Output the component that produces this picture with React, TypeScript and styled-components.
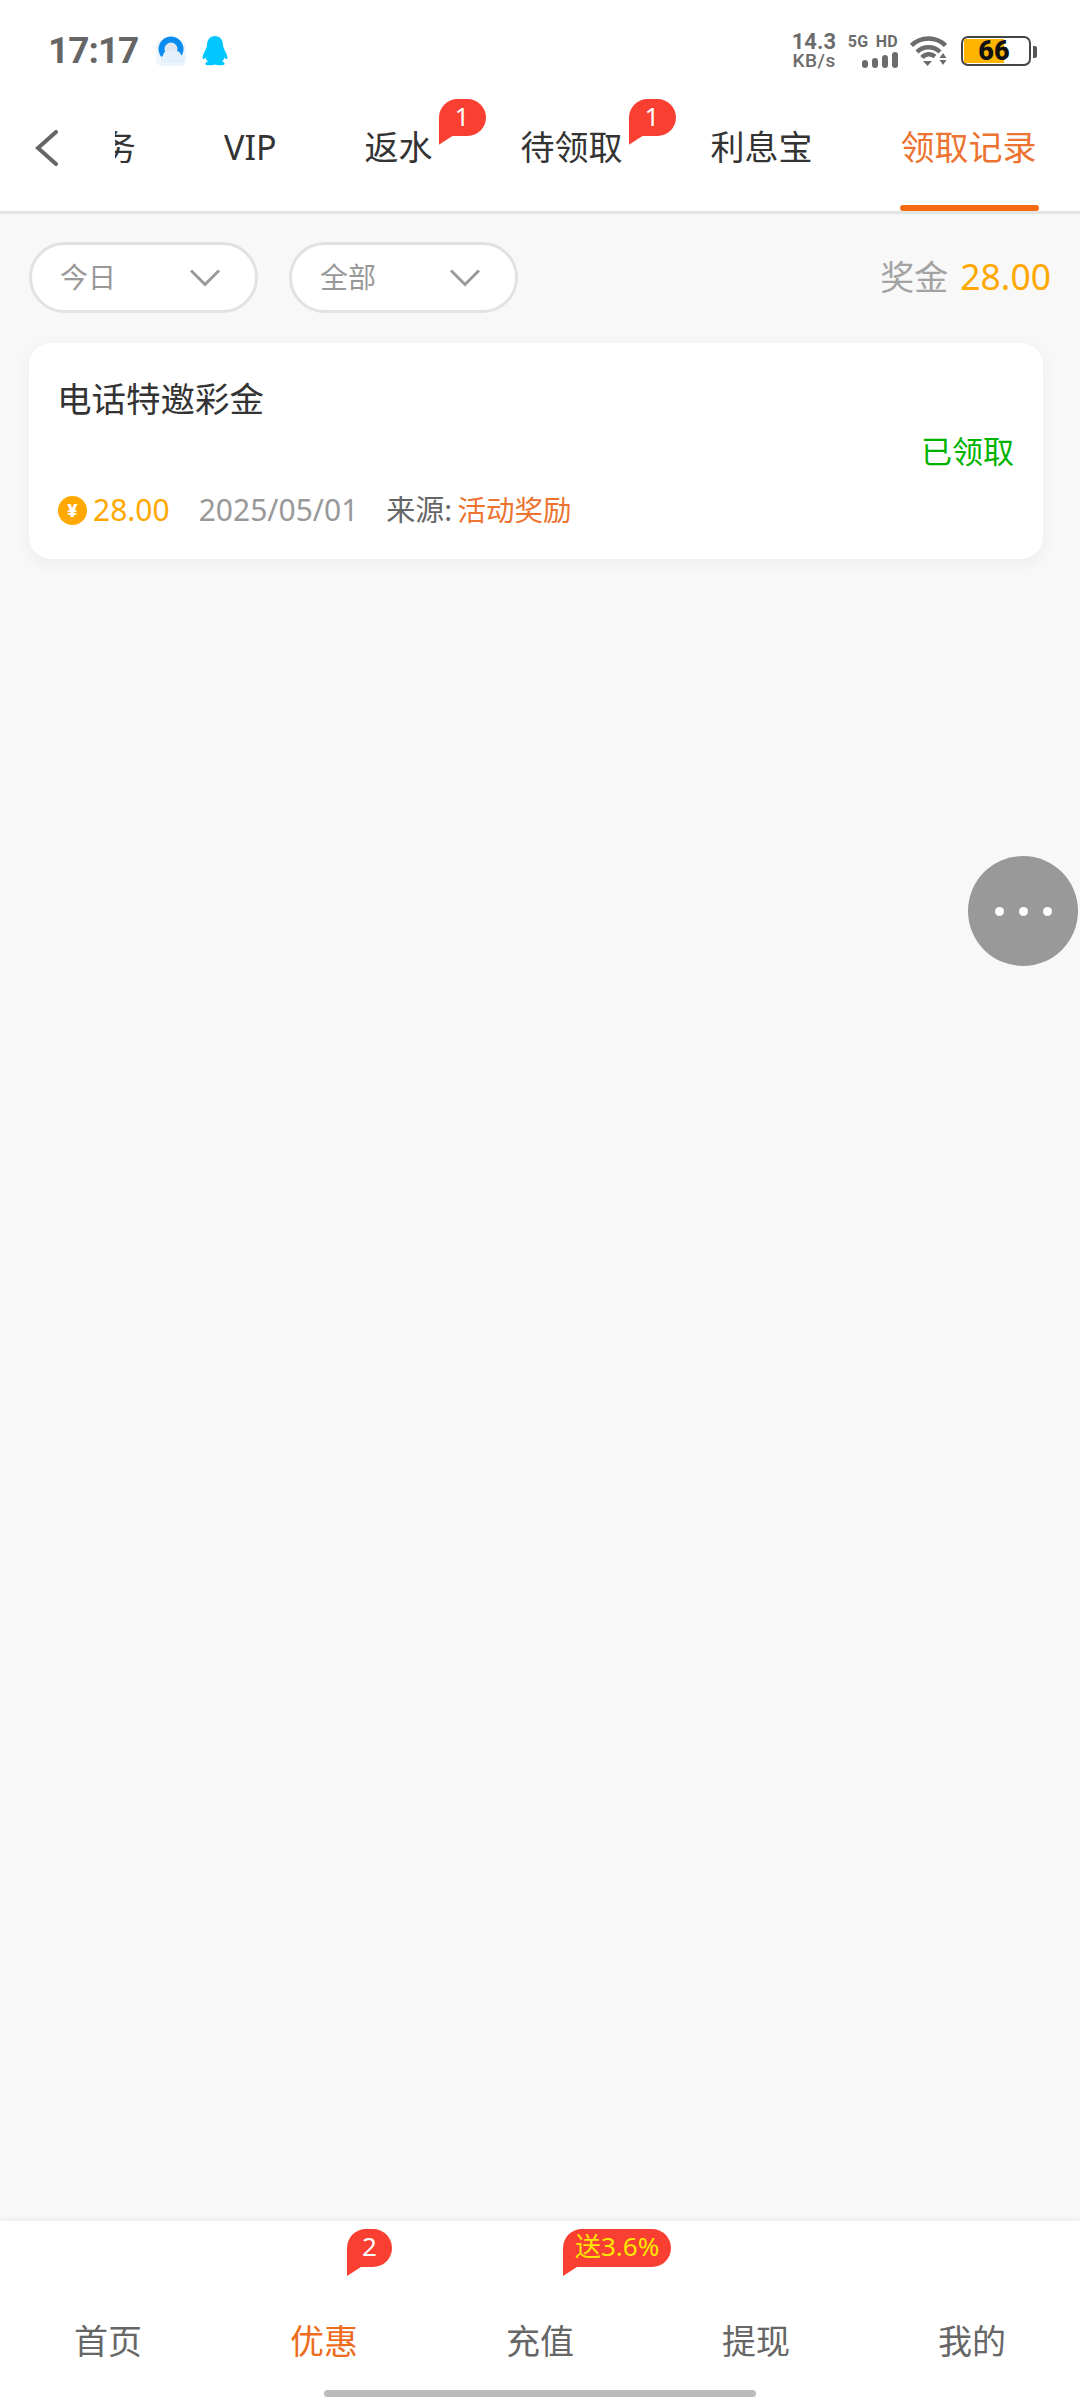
import React from 'react';
import styled, { createGlobalStyle } from 'styled-components';

const GlobalStyle = createGlobalStyle`
  html, body {
    margin: 0;
    padding: 0;
    background: #f8f8f8;
    font-family: "Noto Sans", "Noto Sans CJK SC", sans-serif;
  }
  * {
    box-sizing: border-box;
  }
`;

const ORANGE = '#ec7330';
const GOLD = '#ffa800';

const Page = styled.div`
  position: relative;
  width: 1080px;
  height: 2400px;
  display: flex;
  flex-direction: column;
  overflow: hidden;
  background: #f8f8f8;
`;

const Header = styled.header`
  background: #fff;
  border-bottom: 3px solid #e5e5e5;
`;

const StatusBar = styled.div`
  height: 80px;
  padding: 30px 49px 0 48px;
  display: flex;
  align-items: flex-start;
  justify-content: space-between;
`;

const StatusLeft = styled.div`
  display: flex;
  align-items: center;
  height: 42px;
  gap: 16px;
`;

const Clock = styled.span`
  font-family: "Roboto", sans-serif;
  font-size: 37px;
  font-weight: 700;
  line-height: 42px;
  letter-spacing: -1px;
  color: #666;
  margin-right: 2px;
`;

const StatusRight = styled.div`
  display: flex;
  align-items: center;
  height: 42px;
`;

const Speed = styled.div`
  width: 46px;
  margin-right: 12px;
  font-family: "Roboto", sans-serif;
  color: #6c6c6c;
  text-align: right;
`;

const SpeedValue = styled.div`
  font-size: 22px;
  font-weight: 700;
  line-height: 20px;
`;

const SpeedUnit = styled.div`
  font-size: 19px;
  font-weight: 500;
  line-height: 18px;
  letter-spacing: 0.6px;
`;

const Network = styled.div`
  width: 50px;
  margin-right: 12px;
  display: flex;
  flex-direction: column;
  align-items: flex-end;
  gap: 3px;
`;

const NetworkLabel = styled.div`
  font-family: "Roboto", sans-serif;
  font-size: 16px;
  font-weight: 700;
  line-height: 15px;
  letter-spacing: 0.3px;
  word-spacing: 3px;
  color: #6c6c6c;
  white-space: nowrap;
`;

const Battery = styled.div`
  position: relative;
  width: 70px;
  height: 30px;
  margin-left: 14px;
  padding: 1px;
  border: 2px solid #444;
  border-radius: 7px;
  &::after {
    content: '';
    position: absolute;
    left: 70px;
    top: 8px;
    width: 4px;
    height: 12px;
    border-radius: 0 2px 2px 0;
    background: #555;
  }
`;

const BatteryFill = styled.div`
  height: 100%;
  background: #ffb400;
`;

const BatteryText = styled.span`
  position: absolute;
  left: 13px;
  top: 0;
  width: 36px;
  text-align: center;
  font-family: "Roboto", sans-serif;
  font-size: 27px;
  line-height: 26px;
  font-weight: 900;
  color: #111;
`;

const NavRow = styled.div`
  height: 131px;
  display: flex;
  align-items: stretch;
`;

const BackButton = styled.div`
  flex: 0 0 115px;
  padding: 50px 0 0 35px;
`;

const TabViewport = styled.div`
  flex: 1;
  overflow: hidden;
`;

const TabTrack = styled.div`
  display: flex;
  height: 100%;
  width: max-content;
  margin-left: -91px;
`;

const Tab = styled.div<{ $active?: boolean }>`
  position: relative;
  padding: 43px 44px 0;
  font-size: 34px;
  line-height: 48px;
  white-space: nowrap;
  color: ${(p) => (p.$active ? ORANGE : '#333')};
  ${(p) =>
    p.$active &&
    `
    &::after {
      content: '';
      position: absolute;
      left: 43px;
      right: 42px;
      bottom: 0;
      height: 6px;
      border-radius: 3px;
      background: #f56c12;
    }
  `}
`;

const Bubble = styled.span<{ $promo?: boolean }>`
  position: absolute;
  height: 37px;
  min-width: 47px;
  padding: 0 ${(p) => (p.$promo ? '12px' : '0')};
  border-radius: 19px 19px 19px 0;
  background: #f83f31;
  color: ${(p) => (p.$promo ? '#ffe600' : '#fff')};
  font-size: 26px;
  line-height: 35px;
  text-align: center;
  white-space: nowrap;
  &::after {
    content: '';
    position: absolute;
    left: 0;
    top: 100%;
    width: 14px;
    height: 9px;
    background: #f83f31;
    clip-path: polygon(0 0, 100% 0, 0 100%);
  }
`;

const TabBubble = styled(Bubble)`
  left: calc(100% - 38px);
  top: 19px;
`;

const Main = styled.main`
  flex: 1;
  padding: 28px 30px 0 29px;
`;

const FilterRow = styled.div`
  display: flex;
  align-items: center;
  gap: 31px;
`;

const Pill = styled.div`
  width: 229px;
  height: 71px;
  padding: 1px 35px 0 28px;
  display: flex;
  align-items: center;
  justify-content: space-between;
  background: #fff;
  border: 3px solid #e2e2e2;
  border-radius: 36px;
  font-size: 28px;
  line-height: 60px;
  color: #999;
`;

const PillLabel = styled.span`
  position: relative;
  top: -1px;
`;

const Total = styled.div`
  margin: -4px -1px 0 auto;
  display: flex;
  align-items: baseline;
  gap: 12px;
  font-size: 34px;
  color: #a3a3a3;
`;

const Gold = styled.span<{ $large?: boolean }>`
  color: ${GOLD};
  font-size: ${(p) => (p.$large ? '35.500px' : 'inherit')};
`;

const Card = styled.section`
  margin: 30px 7px 0 0;
  padding: 31px 29px 28px 28px;
  background: #fff;
  border-radius: 22px;
  box-shadow: 0 4px 14px rgba(120, 100, 90, 0.08);
`;

const CardTitle = styled.div`
  font-size: 34.500px;
  line-height: 50px;
  color: #333;
`;

const CardStatus = styled.div`
  margin-top: 9px;
  font-size: 31px;
  line-height: 36px;
  text-align: right;
  color: #00b300;
`;

const CardFoot = styled.div`
  margin-top: 22px;
  height: 40px;
  display: flex;
  align-items: center;
  font-size: 30px;
  line-height: 38px;
  padding: 0 0 2px 1px;
`;

const Coin = styled.span`
  flex: 0 0 29px;
  height: 29px;
  margin-right: 6px;
  border-radius: 50%;
  background: ${GOLD};
  color: #fff;
  font-family: "Roboto", sans-serif;
  font-size: 19px;
  font-weight: 900;
  line-height: 29px;
  text-align: center;
`;

const DateText = styled.span`
  margin-left: 29px;
  color: #999;
`;

const Source = styled.span`
  margin-left: 28px;
  font-size: 29px;
  color: #666;
`;

const SourceName = styled.span`
  margin-left: -2px;
  font-size: 28.500px;
  color: ${ORANGE};
`;

const FloatButton = styled.div`
  position: absolute;
  left: 968px;
  top: 856px;
  width: 110px;
  height: 110px;
  border-radius: 50%;
  background: #999;
  display: flex;
  align-items: center;
  justify-content: center;
  gap: 15px;
`;

const Dot = styled.span`
  width: 9px;
  height: 9px;
  border-radius: 50%;
  background: #fff;
`;

const BottomNav = styled.nav`
  height: 179px;
  background: #fff;
  box-shadow: 0 -2px 5px rgba(0, 0, 0, 0.05);
  display: flex;
  flex-direction: column;
  align-items: center;
`;

const BottomTabs = styled.div`
  align-self: stretch;
  height: 169px;
  display: grid;
  grid-template-columns: repeat(5, 1fr);
`;

const BottomTab = styled.div<{ $active?: boolean }>`
  position: relative;
  padding-top: 96px;
  font-size: 34px;
  line-height: 48px;
  text-align: center;
  color: ${(p) => (p.$active ? '#ee6c1c' : '#666')};
`;

const BottomBubble = styled(Bubble)`
  left: 131px;
  top: 8px;
  height: 38px;
  line-height: 35px;
  min-width: 45px;
`;

const HomeBar = styled.div`
  width: 432px;
  height: 7px;
  border-radius: 4px;
  background: #bbb;
`;

function QQBrowserIcon() {
  return (
    <svg width="30" height="30" viewBox="0 0 30 30">
      <rect y="4" width="30" height="26" rx="6" fill="#eef5fc" />
      <circle cx="15" cy="13" r="9.500" fill="#dfe7f0" stroke="#0a8cf0" strokeWidth="6" />
      <path d="M8 27a4 4 0 0 1-1-7.500 6 6 0 0 1 10-3.500 5 5 0 0 1 8 3 4 4 0 0 1 0 8z" fill="#e4f1fc" />
    </svg>
  );
}

function PenguinIcon() {
  return (
    <svg width="26" height="30" viewBox="0 0 26 30">
      <path
        fill="#00c8ff"
        d="M13 0c5 0 8 4 8 9 0 2 1 3 2 6 2 3 3 7 2 8-1 .6-2-.6-2.600-1.500-.4 1.700-1 3-2.400 4 1.800.6 2.800 1.400 2.600 2.400-.2 1.200-2.600 1.600-5.600 1.400-1.400-.1-2-.5-4-.5s-2.600.4-4 .5c-3 .2-5.400-.2-5.600-1.400-.2-1 .8-1.800 2.600-2.400-1.400-1-2-2.300-2.400-4C2.600 22.400 2 23.600 1 23c-1-1 0-5 2-8 1-3 2-4 2-6 0-5 3-9 8-9z"
      />
    </svg>
  );
}

function SignalIcon() {
  return (
    <svg width="36" height="16" viewBox="0 0 36 16" fill="#6c6c6c">
      <rect x="0" y="8" width="6" height="8" rx="3" />
      <rect x="10" y="6" width="6" height="10" rx="3" />
      <rect x="20" y="3" width="6" height="13" rx="3" />
      <rect x="30" y="0" width="6" height="16" rx="3" />
    </svg>
  );
}

function WifiIcon() {
  return (
    <svg width="37" height="30" viewBox="0 0 37 30" fill="none" stroke="#6c6c6c" strokeWidth="4.500">
      <path d="M1.500 9.500a24 24 0 0 1 34 0" />
      <path d="M7 16a16.500 16.500 0 0 1 23 0" />
      <path d="M12 21.500a9 9 0 0 1 13-1" />
      <path d="M13 25h9l-4.500 5z" fill="#6c6c6c" stroke="none" />
      <path d="M33 17l3.500 5h-7zM33 29l3.500-5h-7z" fill="#6c6c6c" stroke="none" />
    </svg>
  );
}

function BackIcon() {
  return (
    <svg width="24" height="36" viewBox="0 0 24 36" fill="none" stroke="#666" strokeWidth="4" strokeLinecap="round">
      <path d="M21 2L3 18l18 16" />
    </svg>
  );
}

function ChevronIcon() {
  return (
    <svg width="30" height="18" viewBox="0 0 30 18" fill="none" stroke="#999" strokeWidth="3">
      <path d="M1 1.500l14 14 14-14" />
    </svg>
  );
}

const topTabs = [
  { label: '任务' },
  { label: 'VIP' },
  { label: '返水', badge: '1' },
  { label: '待领取', badge: '1' },
  { label: '利息宝' },
  { label: '领取记录', active: true },
];

const bottomTabs = [
  { label: '首页' },
  { label: '优惠', active: true, badge: '2' },
  { label: '充值', badge: '送3.6%', promo: true },
  { label: '提现' },
  { label: '我的' },
];

export default function App() {
  return (
    <Page>
      <GlobalStyle />
      <Header>
        <StatusBar>
          <StatusLeft>
            <Clock>17:17</Clock>
            <QQBrowserIcon />
            <PenguinIcon />
          </StatusLeft>
          <StatusRight>
            <Speed>
              <SpeedValue>14.3</SpeedValue>
              <SpeedUnit>KB/s</SpeedUnit>
            </Speed>
            <Network>
              <NetworkLabel>5G HD</NetworkLabel>
              <SignalIcon />
            </Network>
            <WifiIcon />
            <Battery>
              <BatteryFill style={{ width: '62%' }} />
              <BatteryText>66</BatteryText>
            </Battery>
          </StatusRight>
        </StatusBar>
        <NavRow>
          <BackButton>
            <BackIcon />
          </BackButton>
          <TabViewport>
            <TabTrack>
              {topTabs.map((tab) => (
                <Tab key={tab.label} $active={tab.active}>
                  {tab.label}
                  {tab.badge && <TabBubble>{tab.badge}</TabBubble>}
                </Tab>
              ))}
            </TabTrack>
          </TabViewport>
        </NavRow>
      </Header>

      <Main>
        <FilterRow>
          <Pill>
            <PillLabel>今日</PillLabel>
            <ChevronIcon />
          </Pill>
          <Pill>
            <PillLabel>全部</PillLabel>
            <ChevronIcon />
          </Pill>
          <Total>
            奖金
            <Gold $large>28.00</Gold>
          </Total>
        </FilterRow>
        <Card>
          <CardTitle>电话特邀彩金</CardTitle>
          <CardStatus>已领取</CardStatus>
          <CardFoot>
            <Coin>¥</Coin>
            <Gold>28.00</Gold>
            <DateText>2025/05/01</DateText>
            <Source>
              来源: <SourceName>活动奖励</SourceName>
            </Source>
          </CardFoot>
        </Card>
      </Main>

      <FloatButton>
        <Dot />
        <Dot />
        <Dot />
      </FloatButton>

      <BottomNav>
        <BottomTabs>
          {bottomTabs.map((tab) => (
            <BottomTab key={tab.label} $active={tab.active}>
              {tab.badge && <BottomBubble $promo={tab.promo}>{tab.badge}</BottomBubble>}
              {tab.label}
            </BottomTab>
          ))}
        </BottomTabs>
        <HomeBar />
      </BottomNav>
    </Page>
  );
}
